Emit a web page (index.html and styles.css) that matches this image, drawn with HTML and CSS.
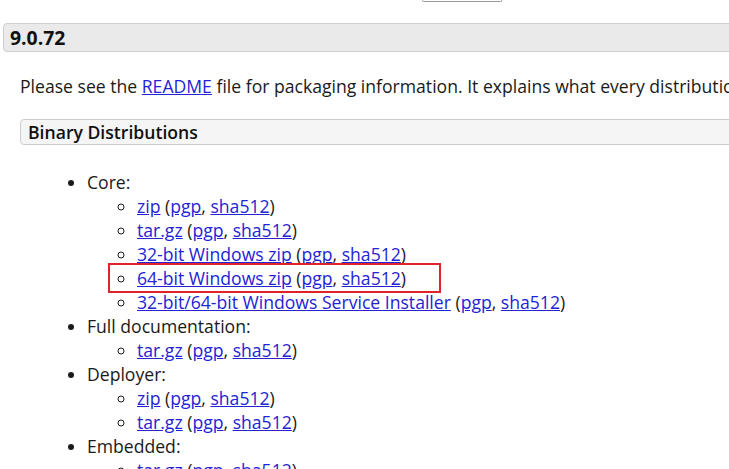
FILE: index.html
```html
<!DOCTYPE html>
<html>
<head>
<meta charset="utf-8">
<link rel="stylesheet" href="styles.css">
</head>
<body>
<div class="page">
  <div class="topbar"><div class="btn-edge"></div></div>
  <h3 class="version">9.0.72</h3>
  <div class="section">
    <p class="intro">Please see the <a href="#">README</a> file for packaging information. It explains what every distribution contains.</p>
    <h4 class="sub">Binary Distributions</h4>
    <ul class="dist">
      <li>Core:
        <ul>
          <li><a href="#">zip</a> (<a href="#">pgp</a>, <a href="#">sha512</a>)</li>
          <li><a href="#">tar.gz</a> (<a href="#">pgp</a>, <a href="#">sha512</a>)</li>
          <li><a href="#">32-bit Windows zip</a> (<a href="#">pgp</a>, <a href="#">sha512</a>)</li>
          <li class="marked"><a href="#">64-bit Windows zip</a> (<a href="#">pgp</a>, <a href="#">sha512</a>)<span class="mark"></span></li>
          <li><a href="#">32-bit/64-bit Windows Service Installer</a> (<a href="#">pgp</a>, <a href="#">sha512</a>)</li>
        </ul>
      </li>
      <li>Full documentation:
        <ul>
          <li><a href="#">tar.gz</a> (<a href="#">pgp</a>, <a href="#">sha512</a>)</li>
        </ul>
      </li>
      <li>Deployer:
        <ul>
          <li><a href="#">zip</a> (<a href="#">pgp</a>, <a href="#">sha512</a>)</li>
          <li><a href="#">tar.gz</a> (<a href="#">pgp</a>, <a href="#">sha512</a>)</li>
        </ul>
      </li>
      <li>Embedded:
        <ul>
          <li><a href="#">tar.gz</a> (<a href="#">pgp</a>, <a href="#">sha512</a>)</li>
          <li><a href="#">zip</a> (<a href="#">pgp</a>, <a href="#">sha512</a>)</li>
        </ul>
      </li>
    </ul>
  </div>
</div>
</body>
</html>
```
FILE: styles.css
```css
html, body {
  margin: 0;
  padding: 0;
  background: #ffffff;
  overflow: hidden;
}
body {
  font-family: "Open Sans", "Liberation Sans", sans-serif;
  font-size: 17.6px;
  line-height: 24px;
  color: #1a1a1a;
}
.page {
  width: 1000px;
  padding-left: 3px;
}
.topbar {
  height: 3px;
}
.btn-edge {
  margin-left: 419px;
  width: 78px;
  height: 1px;
  border: 1px solid #9a9a9a;
  border-top: none;
  border-radius: 0 0 3px 3px;
}
.version {
  margin: 20px 0 0 0;
  padding: 0 6px;
  height: 27px;
  line-height: 27px;
  font-size: 19.4px;
  font-weight: 700;
  background: #eaeaea;
  border: 1px solid #cfcfcf;
  border-radius: 4px;
  color: #111;
}
.section {
  padding-left: 17px;
}
.intro {
  margin: 22px 0 0 0;
  white-space: nowrap;
}
a {
  color: #2323d6;
  text-decoration: underline;
}
.sub {
  margin: 21px 0 0 0;
  padding: 0 7px;
  height: 24px;
  line-height: 24px;
  font-size: 17.6px;
  font-weight: 600;
  background: #f5f5f5;
  border: 1px solid #cccccc;
  border-radius: 4px;
  color: #111;
}
.dist {
  margin: 25px 0 0 0;
  padding-left: 67px;
  list-style: disc;
}
.dist ul {
  margin: 0;
  padding-left: 50px;
  list-style: circle;
}
.dist li {
  white-space: nowrap;
}
.marked {
  position: relative;
}
.mark {
  position: absolute;
  left: -29px;
  top: -3px;
  width: 329px;
  height: 26px;
  border: 2px solid #e0222a;
}
```
